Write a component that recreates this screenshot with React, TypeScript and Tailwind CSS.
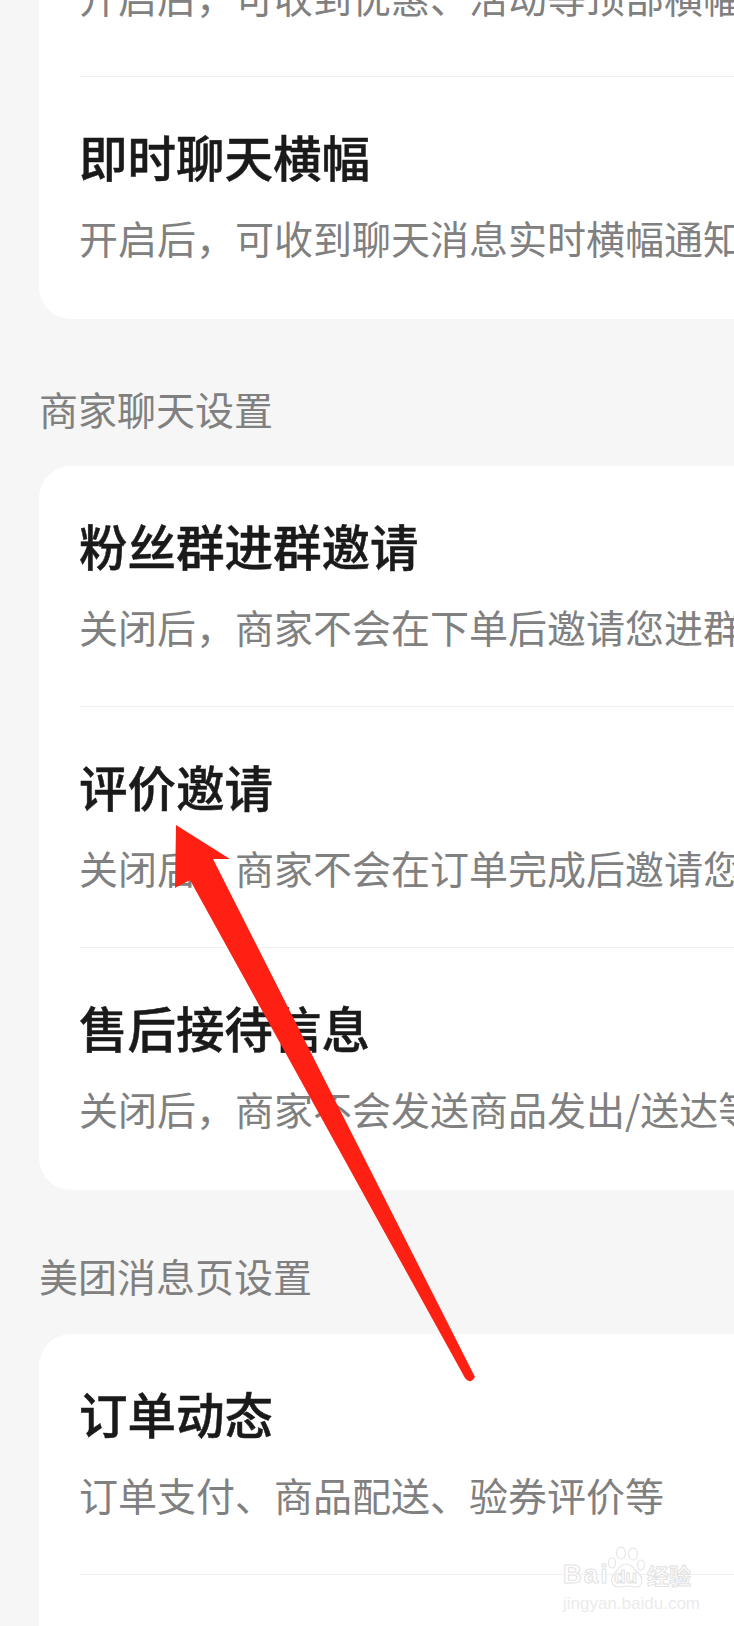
const rowsTop = [
  { title: "", sub: "开启后，可收到优惠、活动等顶部横幅通知" },
  { title: "即时聊天横幅", sub: "开启后，可收到聊天消息实时横幅通知" },
];
const rowsShop = [
  { title: "粉丝群进群邀请", sub: "关闭后，商家不会在下单后邀请您进群" },
  { title: "评价邀请", sub: "关闭后，商家不会在订单完成后邀请您评价" },
  { title: "售后接待信息", sub: "关闭后，商家不会发送商品发出/送达等信息" },
];
const rowsMsg = [
  { title: "订单动态", sub: "订单支付、商品配送、验券评价等" },
  { title: "", sub: "" },
];

type RowData = { title: string; sub: string };

function Row({ row, last }: { row: RowData; last: boolean }) {
  return (
    <div className={`flex h-[241px] flex-col gap-[27px] pt-[50px] ${last ? "" : "border-b border-[#f0f0f0]"}`}>
      <h3 className="ml-[-1px] h-[58px] whitespace-nowrap text-[48.5px] leading-[58px] font-medium text-[#1a1a1a] [-webkit-text-stroke:0.5px_#1a1a1a]">{row.title}</h3>
      <p className="ml-[-1px] whitespace-nowrap text-[39px] leading-[50px] text-[#808080]">{row.sub}</p>
    </div>
  );
}

function Card({ rows }: { rows: RowData[] }) {
  return (
    <section className="ml-[39px] flex w-[760px] flex-col rounded-l-[32px] bg-white pb-[1px] pl-[41px]">
      {rows.map((row, i) => (
        <Row key={i} row={row} last={i === rows.length - 1} />
      ))}
    </section>
  );
}

function Label({ text }: { text: string }) {
  return <h2 className="ml-[39px] whitespace-nowrap text-[39px] leading-[50px] text-[#808080]">{text}</h2>;
}

function Watermark() {
  return (
    <div className="absolute top-[1545px] left-[563px] flex flex-col gap-[3px] text-white">
      <div className="flex items-end font-bold [-webkit-text-stroke:1px_#e2e2e2]">
        <span className="mb-[1px] w-[42px] text-[26px] leading-[32px] tracking-[2px]" style={{ fontFamily: '"Liberation Sans", sans-serif' }}>
          Bai
        </span>
        <div className="relative h-[46px] w-[42px]">
          <svg width="42" height="46" viewBox="0 0 42 46" fill="none" stroke="#e6e6e6" strokeWidth="1.2">
            <ellipse cx="7" cy="18" rx="3.5" ry="5" />
            <ellipse cx="16" cy="8" rx="4.5" ry="6" />
            <ellipse cx="28" cy="9" rx="4.5" ry="6" />
            <ellipse cx="36" cy="20" rx="3.5" ry="5" />
            <path d="M21 19 C15 19 13 25 9 29 C5 33 6 42 14 42 C18 42 19 41 22 41 C25 41 27 42 31 42 C38 42 38 33 34 29 C30 25 27 19 21 19 Z" fill="#ffffff" />
          </svg>
          <span className="absolute top-[20px] left-[9px] text-[19px] leading-[24px]" style={{ fontFamily: '"Liberation Sans", sans-serif' }}>
            du
          </span>
        </div>
        <span className="mb-[1px] text-[22px] leading-[32px]">经验</span>
      </div>
      <span className="text-[17px] leading-[20px] text-[#ebebeb]" style={{ fontFamily: '"Liberation Sans", sans-serif' }}>
        jingyan.baidu.com
      </span>
    </div>
  );
}

export default function App() {
  return (
    <div
      className="relative h-[1626px] w-[734px] overflow-hidden bg-[#f6f6f6]"
      style={{ fontFamily: '"Noto Sans CJK SC", "Noto Sans", sans-serif' }}
    >
      <div className="mt-[-164px] flex flex-col">
        <Card rows={rowsTop} />
        <div className="pt-[64px] pb-[33px]">
          <Label text="商家聊天设置" />
        </div>
        <Card rows={rowsShop} />
        <div className="pt-[60px] pb-[34px]">
          <Label text="美团消息页设置" />
        </div>
        <Card rows={rowsMsg} />
      </div>

      {/* red arrow annotation */}
      <svg className="absolute top-0 left-0" width="734" height="1626" viewBox="0 0 734 1626">
        <path
          d="M176 825 L230 859 L213 859 L475 1377 Q470 1385 465 1378 L190 880 L175 888 Z"
          fill="#fe2013"
        />
      </svg>

      <Watermark />
    </div>
  );
}
